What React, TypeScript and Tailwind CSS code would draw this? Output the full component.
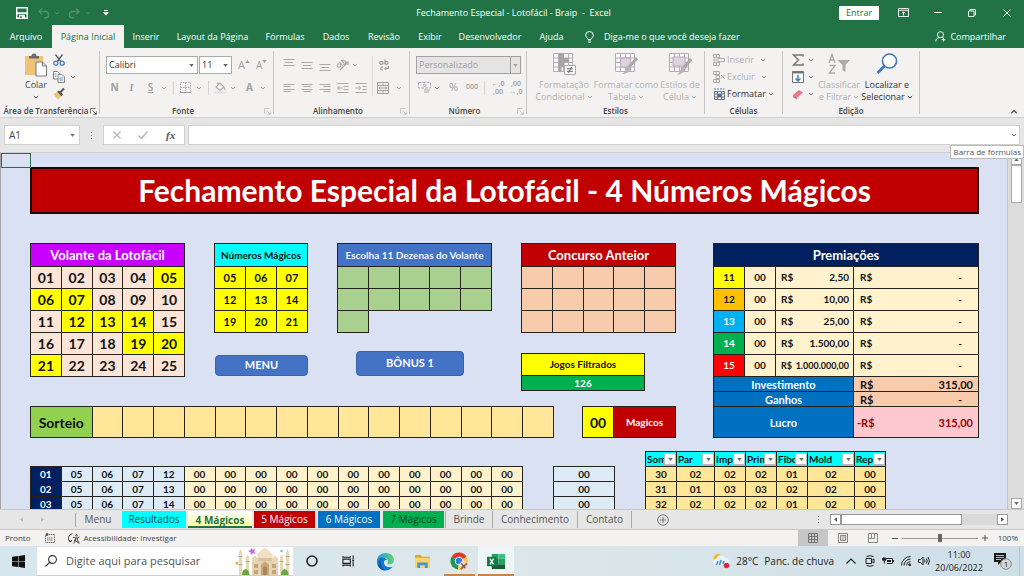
import React from 'react';
import clsx from 'clsx';

const UI = "font-['Open_Sans',sans-serif]";

/* ---------- small shared pieces ---------- */

const Chevron: React.FC<{ className?: string }> = ({ className }) => (
  <svg viewBox="0 0 8 8" className={clsx('size-[6px] shrink-0', className)} fill="none" stroke="currentColor" strokeWidth="1.3">
    <path d="M1.200 2.700 4 5.300 6.800 2.700" />
  </svg>
);

const Triangle: React.FC<{ className?: string }> = ({ className }) => (
  <svg viewBox="0 0 6 4" className={clsx('w-[5px] h-[3px] shrink-0', className)} fill="currentColor">
    <path d="M0 0h6L3 4z" />
  </svg>
);

const Launcher: React.FC<{ className?: string }> = ({ className }) => (
  <svg viewBox="0 0 7 7" className={clsx('size-[7px] shrink-0', className)} fill="none" stroke="currentColor" strokeWidth="0.8">
    <path d="M.5 5.5v-5h5M2.5 2.5l3.6 3.6M6.4 3.4v3H3.4" />
  </svg>
);

interface IconButtonProps {
  label: string;
  className?: string;
  children: React.ReactNode;
}

const IconButton: React.FC<IconButtonProps> = ({ label, className, children }) => (
  <button type="button" aria-label={label} className={clsx('flex items-center justify-center shrink-0', className)}>
    {children}
  </button>
);

interface RibbonGroupProps {
  label: string;
  launcher?: string;
  className?: string;
  children: React.ReactNode;
}

const RibbonGroup: React.FC<RibbonGroupProps> = ({ label, launcher, className, children }) => (
  <section aria-label={label} className={clsx('flex shrink-0', className)}>
    <div className="flex-1 min-w-0 flex flex-col pt-[3px]">
      <div className="flex-1 flex">{children}</div>
      <div className="flex items-center h-[12px] px-[2px] text-[8px] leading-[12px] font-semibold text-[#444]">
        <span className="flex-1 text-center whitespace-nowrap">{label}</span>
        {launcher && <Launcher className={launcher} />}
      </div>
    </div>
    <span className="w-px my-[3px] bg-[#c6c6c6]" />
  </section>
);

const Separator = () => <span className="w-px h-[14px] bg-[#d2d2d2]" />;

/* ---------- title bar and ribbon tabs ---------- */

const TitleBar = () => (
  <header className="flex items-center h-[25px] bg-[#217346] text-white text-[9px]">
    <div className="flex-1 flex items-center pl-[16px] gap-[16px]">
      <IconButton label="Salvar">
        <svg viewBox="0 0 12 12" className="size-[12px]">
          <path d="M.7.7h10.6v10.6H.7z" fill="none" stroke="#fff" strokeWidth="1.4" />
          <path d="M1 5.3h10v2H1zM3 8h6v3.5H3z" fill="#fff" />
          <path d="M4.3 9.3h1.5v2H4.3z" fill="#217346" />
        </svg>
      </IconButton>
      <IconButton label="Desfazer" className="gap-[4px] text-[#4c8f6b] -ml-[6px]">
        <svg viewBox="0 0 12 12" className="size-[12px]" fill="none" stroke="currentColor" strokeWidth="1.4">
          <path d="M4 1.5 1 4.5l3 3M1 4.5h6.5a3 3 0 0 1 0 6.3H6" />
        </svg>
        <Chevron />
      </IconButton>
      <IconButton label="Refazer" className="gap-[5px] text-[#4c8f6b] -ml-[8px]">
        <svg viewBox="0 0 12 12" className="size-[12px]" fill="none" stroke="currentColor" strokeWidth="1.4">
          <path d="m8 1.5 3 3-3 3M11 4.5H4.500a3 3 0 0 0 0 6.300H6" />
        </svg>
        <Chevron />
      </IconButton>
      <IconButton label="Personalizar" className="-ml-[4px]">
        <svg viewBox="0 0 6 6" className="size-[6px]" fill="#fff">
          <path d="M1 0h4v1H1zM0 2.300h6L3 5.500z" />
        </svg>
      </IconButton>
    </div>
    <h1 className="whitespace-pre">Fechamento Especial - Lotofácil - Braip  -  Excel</h1>
    <div className="flex-1 flex items-center justify-end pr-[13px]">
      <button type="button" className="h-[14px] w-[40px] mr-[19px] bg-white text-[#217346]">Entrar</button>
      <IconButton label="Opções da faixa" className="mr-[25px]">
        <svg viewBox="0 0 11 9" className="w-[11px] h-[9px]" fill="none" stroke="#fff" strokeWidth="0.9">
          <path d="M.5.5h10v8H.5zM.5 2.300h10M5.500 7.500V4M4 5.300 5.500 3.800 7 5.300" />
        </svg>
      </IconButton>
      <IconButton label="Minimizar" className="mr-[26px]">
        <span className="block w-[8px] h-px bg-white" />
      </IconButton>
      <IconButton label="Restaurar" className="mr-[27px]">
        <svg viewBox="0 0 8 8" className="size-[8px]" fill="none" stroke="#fff" strokeWidth="0.9">
          <path d="M.5 2h5.500v5.500H.5zM2 2V.5h5.500V6H6" />
        </svg>
      </IconButton>
      <IconButton label="Fechar">
        <svg viewBox="0 0 8 8" className="size-[8px]" stroke="#fff" strokeWidth="0.9">
          <path d="m.5.500 7 7M7.500.500l-7 7" />
        </svg>
      </IconButton>
    </div>
  </header>
);

const RibbonTabs = () => (
  <nav className="flex items-center h-[23px] bg-[#217346] text-white text-[9px] whitespace-nowrap">
    <button type="button" className="w-[52px] h-full">Arquivo</button>
    <button type="button" className="w-[72px] h-full bg-[#f3f2f1] text-[#217346]">Página Inicial</button>
    <button type="button" className="w-[44px] h-full">Inserir</button>
    <button type="button" className="w-[89px] h-full">Layout da Página</button>
    <button type="button" className="w-[56px] h-full">Fórmulas</button>
    <button type="button" className="w-[46px] h-full">Dados</button>
    <button type="button" className="w-[50px] h-full">Revisão</button>
    <button type="button" className="w-[42px] h-full">Exibir</button>
    <button type="button" className="w-[78px] h-full">Desenvolvedor</button>
    <button type="button" className="w-[45px] h-full">Ajuda</button>
    <button type="button" className="flex items-center gap-[10px] h-full pl-[11px]">
      <svg viewBox="0 0 9 12" className="w-[9px] h-[12px]" fill="none" stroke="#fff" strokeWidth="1">
        <path d="M3 8.500C3 7 .7 6.500.7 4.200a3.800 3.700 0 0 1 7.600 0C8.300 6.500 6 7 6 8.500zM3 10h3M3.500 11.500h2" />
      </svg>
      Diga-me o que você deseja fazer
    </button>
    <button type="button" className="flex items-center gap-[4px] h-full ml-auto mr-[18px]">
      <svg viewBox="0 0 12 12" className="size-[11px]" fill="none" stroke="#fff" strokeWidth="1">
        <circle cx="6" cy="4" r="3.300" />
        <path d="M.8 11.500c.2-2.500 1.700-4 3.500-4.500M7.500 7c.8.200 1.400.600 2 1.200M9.300 7.500v4M7.300 9.500h4" />
      </svg>
      Compartilhar
    </button>
  </nav>
);

/* ---------- ribbon ---------- */

const Lines: React.FC<{ label: string; d: string; className?: string }> = ({ label, d, className }) => (
  <IconButton label={label} className={clsx('w-[18px] h-[17px] text-[#a9a9a9]', className)}>
    <svg viewBox="0 0 12 12" className="size-[12px]" fill="none" stroke="currentColor" strokeWidth="1">
      <path d={d} />
    </svg>
  </IconButton>
);

const TableIcon: React.FC<{ children?: React.ReactNode }> = ({ children }) => (
  <svg viewBox="0 0 24 24" className="size-[24px]" fill="none" stroke="#b5acb5" strokeWidth="1">
    <path d="M1.500 1.500h19v18h-19zM1.500 6h19M1.500 10.500h19M1.500 15h19M6.500 1.500v18M11.500 1.500v18M16.500 1.500v18" fill="#faf7fa" />
    {children}
  </svg>
);

interface BigButtonProps {
  icon: React.ReactNode;
  lines: [string, string];
  className?: string;
}

const BigButton: React.FC<BigButtonProps> = ({ icon, lines, className }) => (
  <button type="button" className={clsx('flex flex-col items-center self-start shrink-0 whitespace-nowrap leading-[12px]', className)}>
    <span className="h-[28px] pt-[1px]">{icon}</span>
    <span>{lines[0]}</span>
    <span className="flex items-center gap-[2px]">
      {lines[1]}
      <Chevron />
    </span>
  </button>
);

const ClipboardGroup = () => (
  <RibbonGroup label="Área de Transferência" launcher="text-[#555]" className="w-[100px]">
    <button type="button" className="flex flex-col items-center self-start w-[44px] ml-[14px] leading-[12px] text-[#444]">
      <svg viewBox="0 0 24 24" className="size-[24px] mt-[2px] mb-[2px]">
        <path d="M1 3h18v19H1z" fill="#eec378" />
        <path d="M5 5.500V3h2.500a2.500 2.500 0 0 1 5 0H15v2.500z" fill="#6b6b6b" />
        <path d="M12 9h6.500l4 4v10H12z" fill="#fff" stroke="#777" />
        <path d="M18.500 9v4h4" fill="none" stroke="#777" />
      </svg>
      <span>Colar</span>
      <Chevron className="mt-[3px]" />
    </button>
    <div className="flex flex-col text-[#666]">
      <IconButton label="Recortar" className="w-[12px] h-[17px] -ml-[5px]">
        <svg viewBox="0 0 12 12" className="size-[12px]" fill="none" strokeWidth="1.3">
          <path d="M2.500.5 8 8M9.500.5 4 8" stroke="#5a5a5a" />
          <circle cx="2.800" cy="9.200" r="2" stroke="#4a80bd" />
          <circle cx="9.200" cy="9.200" r="2" stroke="#4a80bd" />
        </svg>
      </IconButton>
      <IconButton label="Copiar" className="h-[17px] gap-[5px] -ml-[5px]">
        <svg viewBox="0 0 12 12" className="size-[12px]" fill="#fff" stroke="#777" strokeWidth="0.9">
          <path d="M.5.5h4l2 2V8h-6z" />
          <path d="M5 3.500h4l2.500 2.500v5.500H5z" />
          <path d="M1.500 3h2M1.500 5h2M6.200 7h4M6.200 9h4" stroke="#4a80bd" />
        </svg>
        <Chevron />
      </IconButton>
      <IconButton label="Pincel" className="w-[12px] h-[17px] -ml-[5px]">
        <svg viewBox="0 0 12 12" className="size-[12px]">
          <path d="m.5 6 4-2 4 4L5 11.800C3.500 9.500 2 8.500.5 6z" fill="#eec378" />
          <path d="m4 3.800 2-1.300 4 3.700-1.500 2z" fill="#555" />
          <path d="m7.500 4 3.500-3.500" stroke="#555" strokeWidth="2" />
        </svg>
      </IconButton>
    </div>
  </RibbonGroup>
);

const FontGroup = () => (
  <RibbonGroup label="Fonte" launcher="text-[#bbb]" className="w-[174px]">
    <div className="flex flex-col pl-[6px] pt-[5px] gap-[5px] text-[#9f9f9f]">
      <div className="flex items-center">
        <label className="grid items-center w-[92px] h-[18px] mr-[1px] border border-[#ababab] bg-white text-[#333]">
          <select aria-label="Fonte" className="col-start-1 row-start-1 appearance-none bg-transparent pl-[2px]">
            <option>Calibri</option>
          </select>
          <Triangle className="col-start-1 row-start-1 justify-self-end mr-[3px] text-[#666]" />
        </label>
        <label className="grid items-center w-[33px] h-[18px] border border-[#ababab] bg-white text-[#333]">
          <select aria-label="Tamanho" className="col-start-1 row-start-1 appearance-none bg-transparent pl-[2px]">
            <option>11</option>
          </select>
          <Triangle className="col-start-1 row-start-1 justify-self-end mr-[3px] text-[#666]" />
        </label>
        <button type="button" className="flex items-start w-[18px] pl-[6px] text-[11px]">A<Triangle className="rotate-180 mt-[3px] w-[3px]" /></button>
        <button type="button" className="flex items-start w-[18px] pl-[6px] text-[10px]">A<Triangle className="mt-[2px] w-[3px]" /></button>
      </div>
      <div className="flex items-center h-[17px] pl-[4px] text-[10px]">
        <button type="button" className="w-[9px] font-bold">N</button>
        <button type="button" className="w-[9px] ml-[8px] font-['Liberation_Serif',serif] italic font-bold">I</button>
        <button type="button" className="w-[9px] ml-[10px] underline font-semibold">S</button>
        <Chevron className="ml-[6px] mr-[6px]" />
        <Separator />
        <svg viewBox="0 0 11 11" className="size-[11px] ml-[6px]" fill="none" stroke="#b9a6bb">
          <path d="M.5.5h10v10H.5zM5.500.5v10M.5 5.500h10" strokeDasharray="1.500 1" />
          <path d="M0 10.500h11" stroke="#999" />
        </svg>
        <Chevron className="ml-[5px] mr-[6px]" />
        <Separator />
        <svg viewBox="0 0 12 12" className="size-[12px] ml-[5px]" fill="none" stroke="#aaa" strokeWidth="1.100">
          <path d="m2 5 4-4 4 4-4 3.500zM4 3V.5M10 5.500q1.500 2 .5 2.500" />
          <path d="M.5 9.500h11v2H.5z" fill="#e3d8e4" stroke="none" />
        </svg>
        <Chevron className="ml-[4px] mr-[9px]" />
        <button type="button" className="w-[9px] font-bold">A</button>
        <Chevron className="ml-[6px]" />
      </div>
    </div>
  </RibbonGroup>
);

const AlignGroup = () => (
  <RibbonGroup label="Alinhamento" launcher="text-[#bbb]" className="w-[136px]">
    <div className="flex flex-col pl-[6px] pt-[5px] gap-[6px] text-[#a9a9a9]">
      <div className="flex items-center">
        <Lines label="Em cima" d="M.5.5h11M2 3.500h8M.5 6.500h11" />
        <Lines label="No meio" d="M.5 3.500h11M2 6.500h8M.5 9.500h11" />
        <Lines label="Embaixo" d="M.5 5.500h11M2 8.500h8M.5 11.500h11" />
        <IconButton label="Orientação" className="w-[25px] h-[17px] gap-[3px]">
          <svg viewBox="0 0 13 12" className="w-[13px] h-[12px]" fill="none" stroke="currentColor" strokeWidth="1.100">
            <circle cx="3" cy="6.500" r="1.800" />
            <path d="m3.500 3 3 3.500M7 5a1.800 1.800 0 1 0-.5-2.800M5 1l3 3M4 11l8-8M12 6V3H9" />
          </svg>
          <Chevron />
        </IconButton>
      </div>
      <div className="flex items-center">
        <Lines label="À esquerda" d="M.5 2.500h11M.5 4.500h7M.5 7.500h11M.5 9.500h7" />
        <Lines label="Centralizar" d="M.5 2.500h11M2.500 4.500h7M.5 7.500h11M2.500 9.500h7" />
        <Lines label="À direita" d="M.5 2.500h11M4.500 4.500h7M.5 7.500h11M4.500 9.500h7" />
        <Lines label="Diminuir recuo" d="M.5 1.500h11M6.500 4.500h5M6.500 7.500h5M.5 10.500h11M5.500 6h-5M2.500 4 .5 6l2 2" />
        <Lines label="Aumentar recuo" d="M.5 1.500h11M7.500 4.500h4M7.500 7.500h4M.5 10.500h11M.5 6h5M3.500 4l2 2-2 2" />
      </div>
    </div>
    <span className="w-px h-[40px] mt-[5px] ml-[2px] bg-[#dadada]" />
    <div className="flex flex-col items-start pl-[4px] pt-[5px] gap-[6px] text-[#9f9f9f]">
      <IconButton label="Quebrar texto" className="w-[14px] h-[17px]">
        <svg viewBox="0 0 12 12" className="size-[12px]" fill="none" stroke="currentColor" strokeWidth="1.200">
          <circle cx="3.200" cy="3.800" r="1.500" />
          <path d="M4.700 2v3.500M7 .5v5" />
          <circle cx="8.600" cy="3.800" r="1.500" />
          <path d="M5 8.200a1.500 1.500 0 1 0 0 2.600M10.500 7v2.500H7M8.300 8.200 7 9.500l1.300 1.300" />
        </svg>
      </IconButton>
      <IconButton label="Mesclar" className="h-[17px] gap-[7px]">
        <svg viewBox="0 0 12 12" className="size-[12px]" fill="none" stroke="currentColor">
          <path d="M.5.5h11v11H.5zM.5 3.500h11M.5 8.500h11M6 .5v3M6 8.500v3M2 6h8M3.500 4.800 2 6l1.500 1.200M8.500 4.800 10 6 8.500 7.200" />
        </svg>
        <Chevron />
      </IconButton>
    </div>
  </RibbonGroup>
);

const DecimalIcon: React.FC<{ label: string; top: string; bottom: string }> = ({ label, top, bottom }) => (
  <button type="button" aria-label={label} className="flex flex-col w-[18px] text-[7px] leading-[8px] font-semibold">
    <span>{top}</span>
    <span>{bottom}</span>
  </button>
);

const NumberGroup = () => (
  <RibbonGroup label="Número" launcher="text-[#bbb]" className="w-[117px]">
    <div className="flex flex-col pl-[6px] pt-[5px] gap-[5px] text-[#9f9f9f]">
      <label className="grid items-center w-[105px] h-[18px] border border-[#a0a0a0] bg-[#e4e4e4] text-[#a0a0a0]">
        <select aria-label="Formato de número" className="col-start-1 row-start-1 appearance-none bg-transparent pl-[2px]">
          <option>Personalizado</option>
        </select>
        <span className="col-start-1 row-start-1 justify-self-end flex items-center justify-center w-[10px] h-full border-l border-[#a0a0a0]">
          <Triangle className="w-[4px]" />
        </span>
      </label>
      <div className="flex items-center h-[17px] pl-[2px]">
        <svg viewBox="0 0 13 12" className="w-[13px] h-[12px]" fill="none" stroke="#b5a8b6">
          <path d="M.5.5h12v5.500H.5z" strokeDasharray="3 1" />
          <circle cx="6.500" cy="3.200" r="1.300" />
          <path d="M6 8h6M6 10h5" stroke="#aaa" />
        </svg>
        <Chevron className="ml-[3px] mr-[9px] text-[#777]" />
        <button type="button" className="w-[17px] text-left text-[11px]">%</button>
        <button type="button" className="w-[18px] text-left text-[7px] font-semibold">000</button>
        <Separator />
        <span className="w-[4px]" />
        <DecimalIcon label="Aumentar casas decimais" top="←,0" bottom=",00" />
        <DecimalIcon label="Diminuir casas decimais" top=",00" bottom="→,0" />
      </div>
    </div>
  </RibbonGroup>
);

const StylesGroup = () => (
  <RibbonGroup label="Estilos" className="w-[178px]">
    <div className="flex text-[#b1b1b1]">
      <BigButton
        className="w-[60px] ml-[7px]"
        lines={['Formatação', 'Condicional']}
        icon={
          <TableIcon>
            <path d="M6.500 1.500h5V6h-5zM6.500 6h10v4.500h-10zM6.500 10.500h6V15h-6zM6.500 15h3v4.500h-3z" fill="#a5a5a5" stroke="none" />
            <path d="M12.500 13.500h11v9h-11z" fill="#fff" stroke="#aaa" />
            <path d="M15 16.800h6M15 19.300h6M19.500 15l-3 6" stroke="#666" />
          </TableIcon>
        }
      />
      <BigButton
        className="w-[64px]"
        lines={['Formatar como', 'Tabela']}
        icon={
          <TableIcon>
            <path d="M6.500 6h10v9h-10z" fill="#ddd2de" />
            <path d="m23 6-8 9" stroke="#a9a9a9" strokeWidth="3" />
            <path d="M14 14c2 0 3 2 2 4s-4 4-8 4c3-2 3-3 3.500-5s1.500-3 2.500-3z" fill="#b5b5b5" stroke="none" />
          </TableIcon>
        }
      />
      <BigButton
        className="w-[44px]"
        lines={['Estilos de', 'Célula']}
        icon={
          <TableIcon>
            <path d="M5 5h12v9H5z" fill="#ddd2de" />
            <path d="m23 7-7 9" stroke="#a9a9a9" strokeWidth="3" />
            <path d="M15 15c2 0 3 2 2 3.500s-4 4-8 4c3-2 3-3 3.500-5S14 15 15 15z" fill="#b5b5b5" stroke="none" />
          </TableIcon>
        }
      />
    </div>
  </RibbonGroup>
);

const CellsGroup = () => (
  <RibbonGroup label="Células" className="w-[78px]">
    <div className="flex flex-col pl-[8px] text-[#b1b1b1]">
      <button type="button" className="flex items-center h-[17px] gap-[2px]">
        <svg viewBox="0 0 12 12" className="size-[12px]" fill="none" stroke="#aaa">
          <path d="M.5.5h6v3h-6zM.5 8.500h6v3h-6zM3.500.5v3M3.500 8.500v3M5 4.500h6.500v3H5zM4 6H.5M2 4.500.5 6 2 7.500" />
        </svg>
        Inserir
        <Chevron className="ml-[4px] text-[#888]" />
      </button>
      <button type="button" className="flex items-center h-[17px] gap-[2px]">
        <svg viewBox="0 0 12 12" className="size-[12px]" fill="none" stroke="#aaa">
          <path d="M.5.5h6v3h-6zM.5 8.500h6v3h-6zM3.500.5v3M3.500 8.500v3M3 4.500h3.500v3H3zM8 4l3.500 3.500M11.500 4 8 7.500" />
        </svg>
        Excluir
        <Chevron className="ml-[4px] text-[#888]" />
      </button>
      <button type="button" className="flex items-center h-[17px] gap-[2px] text-[#333]">
        <svg viewBox="0 0 12 12" className="size-[12px]" fill="none" stroke="#777">
          <path d="M1.500 3.500h10v8h-10zM1.500 6h10M1.500 9h10M4.500 3.500v8M8.500 3.500v8" />
          <path d="M4.500 6h4v3h-4z" fill="#3f78b8" stroke="none" />
          <path d="M1 1h10.500" stroke="#3f78b8" strokeDasharray="2 1" />
        </svg>
        Formatar
        <Chevron className="text-[#666]" />
      </button>
    </div>
  </RibbonGroup>
);

const EditGroup = () => (
  <RibbonGroup label="Edição" className="w-[137px]">
    <div className="flex flex-col pl-[9px] text-[#777]">
      <IconButton label="AutoSoma" className="h-[17px] gap-[4px]">
        <svg viewBox="0 0 12 12" className="size-[12px]" fill="none" stroke="#777" strokeWidth="1.500">
          <path d="M11 2.500V1H1.500l5 5-5 5H11V9.500" />
        </svg>
        <Chevron />
      </IconButton>
      <IconButton label="Preencher" className="h-[17px] gap-[4px]">
        <svg viewBox="0 0 12 12" className="size-[12px]" fill="#fff" stroke="#777">
          <path d="M.5.500h11v11H.500z" />
          <path d="M.5 1.500h11" strokeWidth="2" />
          <path d="M6 4v6M3.500 7.500 6 10l2.500-2.500" fill="none" stroke="#3f78b8" strokeWidth="1.400" />
        </svg>
        <Chevron />
      </IconButton>
      <IconButton label="Limpar" className="h-[17px] gap-[4px]">
        <svg viewBox="0 0 12 12" className="size-[12px]">
          <path d="m1 7 6-5 4 2.500-6 5.500z" fill="#e8788a" />
          <path d="m1 7 4 3-.2 1.500L1 9z" fill="#c95c6e" />
        </svg>
        <Chevron />
      </IconButton>
    </div>
    <BigButton
      className="w-[44px] ml-[3px] text-[#b1b1b1]"
      lines={['Classificar', 'e Filtrar']}
      icon={
        <svg viewBox="0 0 24 24" className="size-[24px]" fill="none" stroke="#aaa" strokeWidth="1.300">
          <path d="m2 11 3-8.500L8 11M3 8h4M2.500 13.500H8l-5.500 7.500H8" />
          <path d="M10.500 8h12.500l-4.500 5v7l-3-2v-5z" fill="#aaa" stroke="none" />
        </svg>
      }
    />
    <BigButton
      className="w-[48px] ml-[2px] text-[#333]"
      lines={['Localizar e', 'Selecionar']}
      icon={
        <svg viewBox="0 0 24 24" className="size-[24px]" fill="none" stroke="#3f78b8">
          <circle cx="14.500" cy="9" r="7" strokeWidth="1.600" fill="#fff" />
          <path d="m9.500 14-7 7" strokeWidth="2.800" />
        </svg>
      }
    />
  </RibbonGroup>
);

const Ribbon = () => (
  <div className="flex h-[69px] bg-[#f3f2f1] text-[9px]">
    <ClipboardGroup />
    <FontGroup />
    <AlignGroup />
    <NumberGroup />
    <StylesGroup />
    <CellsGroup />
    <EditGroup />
    <IconButton label="Recolher faixa" className="ml-auto mr-[6px] self-end mb-[1px] text-[#555]">
      <Chevron className="rotate-180 size-[8px]" />
    </IconButton>
  </div>
);

const FormulaBar = () => (
  <div className="relative flex items-center h-[36px] pl-[4px] pr-[4px] bg-[#e6e6e6] border-t border-b border-[#cfcfcf] text-[10px] text-[#444]">
    <label className="grid items-center w-[76px] h-[20px] bg-white border border-[#d0d0d0]">
      <input aria-label="Caixa de nome" defaultValue="A1" className="col-start-1 row-start-1 w-full pl-[4px] bg-transparent" />
      <Triangle className="col-start-1 row-start-1 justify-self-end mr-[4px] text-[#777]" />
    </label>
    <span className="flex flex-col gap-[2px] mx-[11px]">
      <i className="size-px bg-[#888]" />
      <i className="size-px bg-[#888]" />
      <i className="size-px bg-[#888]" />
    </span>
    <div className="flex items-center justify-around w-[82px] h-[20px] mr-[3px] bg-white border border-[#d0d0d0] text-[#b5b5b5]">
      <IconButton label="Cancelar">
        <svg viewBox="0 0 8 8" className="size-[8px]" stroke="currentColor" strokeWidth="1.200"><path d="m.5.500 7 7M7.500.500l-7 7" /></svg>
      </IconButton>
      <IconButton label="Inserir">
        <svg viewBox="0 0 10 8" className="w-[10px] h-[8px]" fill="none" stroke="currentColor" strokeWidth="1.500"><path d="m.5 4.500 3 3 6-7" /></svg>
      </IconButton>
      <button type="button" className="font-['Liberation_Serif',serif] italic font-bold text-[11px] text-[#555]">fx</button>
    </div>
    <label className="flex-1 grid items-center h-[20px] bg-white border border-[#d0d0d0]">
      <input aria-label="Barra de fórmulas" className="col-start-1 row-start-1 w-full bg-transparent" />
      <Chevron className="col-start-1 row-start-1 justify-self-end mr-[2px] text-[#555]" />
    </label>
    <span role="tooltip" className="absolute right-0 top-[27px] z-10 px-[2px] border border-[#bbb] bg-white text-[8px] leading-[12px] font-medium text-[#555]">
      Barra de fórmulas
    </span>
  </div>
);

/* ---------- worksheet ---------- */

const MAGIC = ['05', '06', '07', '12', '13', '14', '19', '20', '21'];

const td = 'border border-[#26221c] p-0 text-center';

const range = (n: number) => Array.from({ length: n }, (_, i) => i);
const pad = (n: number) => String(n).padStart(2, '0');

interface PanelProps {
  title: string;
  cols: number;
  className: string;
  headClass: string;
  children: React.ReactNode;
}

const Panel: React.FC<PanelProps> = ({ title, cols, className, headClass, children }) => (
  <table className={clsx('table-fixed border-collapse font-bold', className)}>
    <thead>
      <tr className="h-[23px]">
        <th colSpan={cols} className={clsx(td, 'whitespace-nowrap', headClass)}>{title}</th>
      </tr>
    </thead>
    <tbody>{children}</tbody>
  </table>
);

const Volante = () => (
  <Panel title="Volante da Lotofácil" cols={5} className="w-[155px] text-[14px] leading-[16px]" headClass="bg-[#c800ff] text-white text-[13px]">
    {range(5).map((r) => (
      <tr key={r} className="h-[22px]">
        {range(5).map((c) => {
          const n = pad(r * 5 + c + 1);
          return (
            <td key={c} className={clsx(td, MAGIC.includes(n) ? 'bg-[#ffff00]' : 'bg-[#fce4d6]')}>{n}</td>
          );
        })}
      </tr>
    ))}
  </Panel>
);

const Numeros = () => (
  <Panel title="Números Mágicos" cols={3} className="w-[94px] text-[11px] leading-[14px]" headClass="bg-[#00ffff] text-[10px]">
    {range(3).map((r) => (
      <tr key={r} className="h-[22px]">
        {range(3).map((c) => (
          <td key={c} className={clsx(td, 'bg-[#ffff00]')}>{MAGIC[r * 3 + c]}</td>
        ))}
      </tr>
    ))}
  </Panel>
);

const Escolha = () => (
  <Panel title="Escolha 11 Dezenas do Volante" cols={5} className="w-[155px] leading-[14px]" headClass="bg-[#4472c4] text-[#f0f4fc] text-[10px]">
    {[5, 5, 1].map((count, r) => (
      <tr key={r} className="h-[22px]">
        {range(count).map((c) => (
          <td key={c} className={clsx(td, 'bg-[#a9d08e]')} />
        ))}
      </tr>
    ))}
  </Panel>
);

const Concurso = () => (
  <Panel title="Concurso Anteior" cols={5} className="w-[155px] leading-[16px]" headClass="bg-[#c00000] text-white text-[13px]">
    {range(3).map((r) => (
      <tr key={r} className="h-[22px]">
        {range(5).map((c) => (
          <td key={c} className={clsx(td, 'bg-[#f8cbad]')} />
        ))}
      </tr>
    ))}
  </Panel>
);

const prizes = [
  { hits: '11', value: '2,50', color: 'bg-[#ffff00]' },
  { hits: '12', value: '10,00', color: 'bg-[#ffc000]' },
  { hits: '13', value: '25,00', color: 'bg-[#00b0f0] text-white' },
  { hits: '14', value: '1.500,00', color: 'bg-[#00b050] text-white' },
  { hits: '15', value: '1.000.000,00', color: 'bg-[#ff0000] text-white' },
];

const totals = [
  { label: 'Investimento', sign: 'R$', value: '315,00', row: 'h-[15px]', color: 'bg-[#f8cbad]' },
  { label: 'Ganhos', sign: 'R$', value: '-', row: 'h-[15px]', color: 'bg-[#f8cbad]' },
  { label: 'Lucro', sign: '-R$', value: '315,00', row: 'h-[31px]', color: 'bg-[#ffc7ce] text-[#9c0006]' },
];

const Premiacoes = () => (
  <table className="table-fixed border-collapse w-[266px] font-bold text-[10px] leading-[13px]">
    <colgroup>
      <col className="w-[31px]" />
      <col className="w-[31px]" />
      <col className="w-[78px]" />
      <col />
    </colgroup>
    <thead>
      <tr className="h-[23px]">
        <th colSpan={4} className={clsx(td, 'bg-[#002060] text-white text-[13px]')}>Premiações</th>
      </tr>
    </thead>
    <tbody>
      {prizes.map((p) => (
        <tr key={p.hits} className="h-[22px] bg-[#fff2cc]">
          <td className={clsx(td, p.color)}>{p.hits}</td>
          <td className={td}>00</td>
          <td className={td}>
            <div className={clsx('flex justify-between pl-[5px] pr-[4px]', p.value.length > 10 && 'text-[9px]')}>
              <span>R$</span>
              <span>{p.value}</span>
            </div>
          </td>
          <td className={td}>
            <div className="flex justify-between pl-[6px] pr-[16px]"><span>R$</span><span>-</span></div>
          </td>
        </tr>
      ))}
      {totals.map((t) => (
        <tr key={t.label} className={clsx(t.row, 'text-[11px]')}>
          <td colSpan={3} className={clsx(td, 'bg-[#0070c0] text-white')}>{t.label}</td>
          <td className={clsx(td, t.color)}>
            <div className={clsx('flex justify-between', t.sign === 'R$' ? 'pl-[6px]' : 'pl-[3px]', t.value === '-' ? 'pr-[16px]' : 'pr-[5px]')}>
              <span>{t.sign}</span>
              <span>{t.value}</span>
            </div>
          </td>
        </tr>
      ))}
    </tbody>
  </table>
);

const filters = ['Soma', 'Par', 'Impar', 'Primo', 'Fibo', 'Mold', 'Rep'];
const filterCols = ['w-[31px]', 'w-[38px]', 'w-[31px]', 'w-[31px]', 'w-[31px]', 'w-[47px]', 'w-[31px]'];
const filterRows = [
  ['30', '02', '02', '02', '01', '02', '00'],
  ['31', '01', '03', '03', '02', '02', '00'],
  ['32', '02', '02', '02', '01', '02', '00'],
];

const FilterTable = () => (
  <table className="table-fixed border-collapse w-[240px]">
    <colgroup>
      {filterCols.map((w, i) => (
        <col key={i} className={w} />
      ))}
    </colgroup>
    <thead>
      <tr className="h-[15px] bg-[#00ffff]">
        {filters.map((f) => (
          <th key={f} className={clsx(td, 'text-left')}>
            <div className="flex items-center pl-[1px]">
              <span className="flex-1 overflow-hidden">{f}</span>
              <button type="button" aria-label={`Filtrar ${f}`} className="flex items-center justify-center shrink-0 w-[12px] h-[12px] border border-[#bbb] bg-white text-[#666]">
                <Triangle />
              </button>
            </div>
          </th>
        ))}
      </tr>
    </thead>
    <tbody>
      {filterRows.map((row) => (
        <tr key={row[0]} className="h-[15px] bg-[#ffe699]">
          {row.map((v, i) => (
            <td key={i} className={td}>{v}</td>
          ))}
        </tr>
      ))}
    </tbody>
  </table>
);

const Worksheet = () => (
  <main className="flex-1 min-h-0 flex bg-[#d9e1f2]">
    <div className="relative flex-1 min-w-0 overflow-hidden pl-[29px] pr-[28px] pt-[14px] border-l border-[#a6a6a6] font-['Lato',sans-serif] text-[#111]">
      <span className="absolute left-0 top-0 w-[30px] h-[15px] border border-[#217346]" />
      <h2 className="flex items-center justify-center h-[47px] border-2 border-[#1a0a0a] bg-[#c00000] text-white text-[30px] font-bold whitespace-nowrap">
        Fechamento Especial da Lotofácil - 4 Números Mágicos
      </h2>
      <div className="flex items-start gap-[37px] mt-[29px]">
        <div className="shrink-0">
          <div className="flex items-start gap-[29px] h-[163px]">
            <Volante />
            <div className="flex flex-col">
              <Numeros />
              <button type="button" className="h-[21px] mt-[22px] ml-[1px] rounded-[4px] border border-[#3a62ab] bg-[#4472c4] text-white font-bold text-[11px]">MENU</button>
            </div>
            <div className="flex flex-col items-start">
              <Escolha />
              <button type="button" className="w-[108px] h-[25px] mt-[18px] ml-[19px] rounded-[4px] border border-[#3a62ab] bg-[#4472c4] text-white font-bold text-[11px]">BÔNUS 1</button>
            </div>
            <div>
              <Concurso />
              <table className="table-fixed border-collapse w-[124px] mt-[20px] font-bold text-[10px] leading-[13px]">
                <tbody>
                  <tr className="h-[22px]"><th className={clsx(td, 'bg-[#ffff00]')}>Jogos Filtrados</th></tr>
                  <tr className="h-[15px]"><td className={clsx(td, 'bg-[#00b050] text-white')}>126</td></tr>
                </tbody>
              </table>
            </div>
          </div>
          <div className="flex justify-between">
            <table className="table-fixed border-collapse w-[524px] font-bold text-[14px]">
              <tbody>
                <tr className="h-[31px]">
                  <th colSpan={2} className={clsx(td, 'bg-[#92d050]')}>Sorteio</th>
                  {range(15).map((c) => (
                    <td key={c} className={clsx(td, 'bg-[#ffe699]')} />
                  ))}
                </tr>
              </tbody>
            </table>
            <table className="table-fixed border-collapse w-[94px] font-bold text-[10px]">
              <tbody>
                <tr className="h-[31px]">
                  <td className={clsx(td, 'bg-[#ffff00] text-[14px]')}>00</td>
                  <th colSpan={2} className={clsx(td, 'bg-[#c00000] text-white')}>Magicos</th>
                </tr>
              </tbody>
            </table>
          </div>
        </div>
        <Premiacoes />
      </div>
      <div className="flex items-end gap-[30px] mt-[13px] font-bold text-[10px] leading-[14px]">
        <table className="table-fixed border-collapse w-[493px]">
          <tbody>
            {['12', '13', '14'].map((last, r) => (
              <tr key={last} className="h-[15px]">
                <th className={clsx(td, 'bg-[#002060] text-white')}>{pad(r + 1)}</th>
                {['05', '06', '07', last].map((v) => (
                  <td key={v} className={clsx(td, 'bg-[#ddebf7]')}>{v}</td>
                ))}
                {range(11).map((c) => (
                  <td key={c} className={clsx(td, 'bg-[#fff2cc]')}>00</td>
                ))}
              </tr>
            ))}
          </tbody>
        </table>
        <table className="table-fixed border-collapse w-[62px]">
          <tbody>
            {range(3).map((r) => (
              <tr key={r} className="h-[15px]"><td className={clsx(td, 'bg-[#ddebf7]')}>00</td></tr>
            ))}
          </tbody>
        </table>
        <FilterTable />
      </div>
    </div>
    <div className="flex flex-col items-center w-[17px] pt-[1px] bg-[#dcdcdc] border-l border-[#c3c3c3]">
      <IconButton label="Rolar para cima" className="w-[11px] h-[11px] border border-[#aaa] bg-white text-[#666]">
        <Triangle className="rotate-180" />
      </IconButton>
      <span className="w-[11px] h-[38px] border border-[#aaa] bg-white" />
      <IconButton label="Rolar para baixo" className="w-[11px] h-[11px] mt-auto border border-[#aaa] bg-white text-[#666]">
        <Triangle />
      </IconButton>
    </div>
  </main>
);

/* ---------- sheet tabs and status bar ---------- */

const sheets = [
  { name: 'Menu', className: 'w-[44px]' },
  { name: 'Resultados', className: 'w-[64px] mx-[2px] bg-[#00ffff] text-[#0b4545]' },
  { name: '4 Mágicos', className: 'w-[64px] mr-[2px] pt-[2px] bg-linear-to-b from-white to-[#ffffa0] font-bold text-[#217346] border-b-2 border-[#217346]' },
  { name: '5 Mágicos', className: 'w-[61px] mr-[3px] bg-[#c00000] text-white' },
  { name: '6 Mágicos', className: 'w-[62px] mr-[3px] bg-[#0070c0] text-white' },
  { name: '7 Mágicos', className: 'w-[61px] mr-[1px] bg-[#00b050] text-[#0c3b20]' },
  { name: 'Brinde', className: 'w-[48px] border-x border-[#aaa]' },
  { name: 'Conhecimento', className: 'w-[85px] border-r border-[#aaa]' },
  { name: 'Contato', className: 'w-[54px] border-r border-[#aaa]' },
];

const SheetTabs = () => (
  <nav className="flex items-center h-[21px] bg-[#e6e6e6] border-t border-b border-[#c8c8c8] text-[10px] text-[#555]">
    <div className="flex items-center gap-[16px] w-[75px] pl-[19px] text-[#bbb]">
      <Triangle className="rotate-90" />
      <Triangle className="-rotate-90" />
    </div>
    <span className="w-px h-[14px] bg-[#aaa]" />
    {sheets.map((s) => (
      <button key={s.name} type="button" className={clsx('h-[17px] shrink-0 leading-[15px] whitespace-nowrap', s.className)}>
        {s.name}
      </button>
    ))}
    <IconButton label="Nova planilha" className="ml-[25px]">
      <svg viewBox="0 0 12 12" className="size-[12px]" fill="none" stroke="#777"><circle cx="6" cy="6" r="5.300" /><path d="M6 3v6M3 6h6" /></svg>
    </IconButton>
    <span className="flex flex-col gap-[2px] ml-auto mr-[11px]">
      <i className="size-px bg-[#888]" />
      <i className="size-px bg-[#888]" />
      <i className="size-px bg-[#888]" />
    </span>
    <div className="flex w-[178px] h-[11px] mr-[16px] bg-[#d9d9d9]">
      <IconButton label="Rolar para a esquerda" className="w-[11px] border border-[#999] bg-white text-[#555]"><Triangle className="rotate-90" /></IconButton>
      <span className="w-[121px] border border-[#999] bg-white" />
      <IconButton label="Rolar para a direita" className="w-[11px] ml-auto border border-[#999] bg-white text-[#555]"><Triangle className="-rotate-90" /></IconButton>
    </div>
  </nav>
);

const StatusBar = () => (
  <div className="flex items-center h-[16px] bg-[#f3f2f1] text-[8px] font-medium text-[#444]">
    <span className="ml-[5px]">Pronto</span>
    <svg viewBox="0 0 10 10" className="size-[10px] ml-[15px]" fill="none" stroke="#777">
      <path d="M.5 2.500v7h9v-7M4 1.500h5.500M2 5h6M2 7h6" strokeDasharray="1.500 .5" />
      <circle cx="2" cy="1.500" r="1.500" fill="#555" stroke="none" />
    </svg>
    <button type="button" className="flex items-center gap-[3px] ml-[13px]">
      <svg viewBox="0 0 12 11" className="w-[12px] h-[11px]" fill="none" stroke="#444">
        <path d="M4.500.7a4.500 4.500 0 0 0-2 8.300M.8 7.500l2 1.500L4 7" />
        <path d="M5 4.200l2.500.8h2L11.500 4M7.500 5v2l-1.800 3.500M9.500 5v2l1.800 3.500M6 7l5 3" />
        <circle cx="8.500" cy="2.500" r=".8" />
      </svg>
      Acessibilidade: investigar
    </button>
    <IconButton label="Normal" className="w-[30px] h-full ml-auto bg-[#c6c6c6]">
      <svg viewBox="0 0 10 10" className="size-[10px]" fill="none" stroke="#777"><path d="M.5.500h9v9H.500zM.5 3.500h9M.5 6.500h9M3.500.5v9M6.500.5v9" /></svg>
    </IconButton>
    <IconButton label="Layout da página" className="w-[30px]">
      <svg viewBox="0 0 10 10" className="size-[10px]" fill="none" stroke="#888"><path d="M.5.500h9v9H.500zM2.500 2.500h5v5h-5zM3.500 4h3M3.500 6h3" /></svg>
    </IconButton>
    <IconButton label="Quebra de página" className="w-[30px]">
      <svg viewBox="0 0 10 10" className="size-[10px]" fill="none" stroke="#888"><path d="M.5.500h9v9H.500zM.5 5.500h6v-5M3.500.5v5" /></svg>
    </IconButton>
    <span className="w-[6px] h-px ml-[4px] bg-[#555]" />
    <label className="grid items-center w-[76px] mx-[4px]">
      <input type="range" aria-label="Zoom" defaultValue={50} className="col-start-1 row-start-1 w-full h-[10px] appearance-none bg-transparent [&::-webkit-slider-runnable-track]:h-[8px] [&::-webkit-slider-runnable-track]:bg-[linear-gradient(#999,#999)] [&::-webkit-slider-runnable-track]:bg-[length:100%_1px] [&::-webkit-slider-runnable-track]:bg-center [&::-webkit-slider-runnable-track]:bg-no-repeat [&::-webkit-slider-thumb]:appearance-none [&::-webkit-slider-thumb]:w-[4px] [&::-webkit-slider-thumb]:h-[8px] [&::-webkit-slider-thumb]:bg-[#666]" />
    </label>
    <svg viewBox="0 0 6 6" className="size-[6px]" stroke="#555"><path d="M3 0v6M0 3h6" /></svg>
    <span className="ml-[10px] mr-[6px]">100%</span>
  </div>
);

/* ---------- taskbar ---------- */

const TajMahal = () => (
  <svg viewBox="0 0 58 28" className="w-[58px] h-[28px] shrink-0">
    <path d="M17 28V14h26v14z" fill="#e6d3b3" />
    <path d="M23 14V11h14v3z" fill="#d8c09a" />
    <path d="M23 11c-3-5 3-7 7-10.500C34 4 40 6 37 11z" fill="#f0e0c4" />
    <path d="M17 14c-1.500-3 1.500-4 3-5.500 1.500 1.500 4 2.500 3 5.500zM37 14c-1.500-3 1.500-4 3-5.500 1.500 1.500 4 2.500 3 5.500z" fill="#ead7b8" />
    <path d="M26 28v-9c0-3 3-3 4-5 1 2 4 2 4 5v9z" fill="#c9a77a" />
    <path d="M28 28v-7c0-2 4-2 4 0v7z" fill="#a88760" />
    <path d="M19 17h4v4h-4zM19 23h4v4h-4zM37 17h4v4h-4zM37 23h4v4h-4z" fill="#c4a47a" />
    <path d="M4 28V5l1.500-3L7 5v23zM11 28V10l1.500-2.500L14 10v18zM45 28V10l1.500-2.500L48 10v18zM51 28V5l1.500-3L54 5v23z" fill="#e8d6b8" />
    <path d="M3.500 9h4v1h-4zM3.500 17h4v1h-4zM50.500 9h4v1h-4zM50.500 17h4v1h-4zM10.500 14h4v1h-4zM44.500 14h4v1h-4z" fill="#bfa27a" />
    <path d="M7 28q0-5 3.500-6 4 1 4 6zM46 28q0-5 3.500-6 4 1 4 6z" fill="#6aa63f" />
    <path d="m16 1 1.500 1.500 2.500-.5-.8 2.500L20.500 7l-2.500-.7L16 8l-.5-2.700L13 4l2.500-.8z" fill="#c86be0" />
    <circle cx="1.800" cy="16" r="1.500" fill="#f5a623" />
    <circle cx="46.500" cy="4" r="1.300" fill="#58cde4" />
  </svg>
);

const Taskbar = () => (
  <footer className="flex items-center h-[30px] bg-linear-to-r from-[#d6e6ee] via-[#dce7ea] to-[#cfdfe8] text-[#222]">
    <IconButton label="Iniciar" className="w-[37px] h-full">
      <svg viewBox="0 0 12 12" className="size-[13px]" fill="#111">
        <path d="M0 1.700 5.500 1v4.700H0zM6 .9l6-.9v5.700H6zM0 6.300h5.500V11L0 10.300zM6 6.300h6V12l-6-.9z" />
      </svg>
    </IconButton>
    <label className="flex items-center w-[256px] h-[29px] self-end pl-[8px] bg-white border-b border-[#ccc]">
      <svg viewBox="0 0 12 12" className="size-[12px] shrink-0" fill="none" stroke="#333" strokeWidth="1.100">
        <circle cx="7.500" cy="4.500" r="3.900" />
        <path d="m4.500 7.500-4 4" />
      </svg>
      <input aria-label="Pesquisar" placeholder="Digite aqui para pesquisar" className="flex-1 min-w-0 ml-[9px] bg-transparent text-[11px] placeholder:text-[#555] placeholder:opacity-100" />
      <TajMahal />
    </label>
    <IconButton label="Cortana" className="w-[37px] h-full">
      <svg viewBox="0 0 12 12" className="size-[12px]" fill="none" stroke="#222" strokeWidth="1.600"><circle cx="6" cy="6" r="5" /></svg>
    </IconButton>
    <IconButton label="Visão de tarefas" className="w-[36px] h-full">
      <svg viewBox="0 0 14 12" className="w-[13px] h-[12px]" fill="none" stroke="#222" strokeWidth="1.200">
        <path d="M1 .5V2h8V.5M1 4h8v4.500H1zM1 12v-1.500h8V12M12 0v4M12 7v5" />
        <path d="M11 4.500h2v2h-2z" fill="#222" stroke="none" />
      </svg>
    </IconButton>
    <IconButton label="Edge" className="w-[38px] h-full">
      <svg viewBox="0 0 20 20" className="size-[19px]">
        <defs>
          <linearGradient id="edgeTop" x1="0" x2="1" y1="0" y2="0">
            <stop offset="0" stopColor="#2a9be0" />
            <stop offset="1" stopColor="#5fd46b" />
          </linearGradient>
        </defs>
        <path d="M1 10C1 4 5 1 10.500 1 16 1 19 5 19 8.500c0 3-2 4.500-4.500 4.500-2 0-3-.8-2.500-1.500C13.500 9 12 6 8 6 4.500 6 2 7.500 1 10z" fill="url(#edgeTop)" />
        <path d="M1 10c.5-3 4-4.500 7-4 1.500.2 3.500 1.500 4 3-1-1-3-.5-3.500 1-.8 3 2 6 5.500 6 1.500 0 2.500-.3 3.500-.8C16 18 13 19.300 10 19.300 5 19.300.8 15 1 10z" fill="#1477d1" />
        <path d="M5 11c0 4 3 7.500 6 8.300-3.500.3-6.500-1-8-3.300C2 13.500 3 8 8 6.500 6 7.500 5 9 5 11z" fill="#1156a6" />
      </svg>
    </IconButton>
    <IconButton label="Explorador" className="w-[37px] h-full">
      <svg viewBox="0 0 18 16" className="w-[17px] h-[15px]">
        <path d="M1 1h6l1.500 2H17v4H1z" fill="#e0a52c" />
        <path d="M1 4h16v11H1z" fill="#fcd466" />
        <path d="M3.500 15V9h11v6h-3v-3h-5v3z" fill="#3f95d9" />
      </svg>
    </IconButton>
    <IconButton label="Chrome" className="w-[31px] h-full mx-[3px] border-b-2 border-[#c8824a] pt-[2px]">
      <svg viewBox="0 0 20 20" className="size-[19px]">
        <path d="M9.500 9.500 1.700 5A9 9 0 0 1 17.500 5.300z" fill="#e0392c" />
        <path d="M9.500 9.500 1.700 5A9 9 0 0 0 8.500 18.500z" fill="#1e9a50" />
        <path d="M9.500 9.500 17.500 5.300A9 9 0 0 1 8.500 18.500z" fill="#fcc934" />
        <circle cx="9.500" cy="9.500" r="4.500" fill="#fff" />
        <circle cx="9.500" cy="9.500" r="3.500" fill="#2f7de1" />
        <circle cx="14.500" cy="14.500" r="5" fill="#f1d9c4" />
        <path d="m10.500 17 7-6 1 2-6.500 6z" fill="#c0622f" />
        <path d="m12 12 4 5" stroke="#3d5ca8" strokeWidth="1.500" />
      </svg>
    </IconButton>
    <IconButton label="Excel" className="w-[36px] h-full border-b-2 border-[#c8824a] bg-[#edf5f6] pt-[2px]">
      <svg viewBox="0 0 20 18" className="w-[19px] h-[17px]">
        <path d="M5 1h7v5H5z" fill="#21a366" />
        <path d="M12 1h7v5h-7z" fill="#33c481" />
        <path d="M5 6h7v6H5z" fill="#107c41" />
        <path d="M12 6h7v6h-7z" fill="#21a366" />
        <path d="M5 12h14v5H5z" fill="#185c37" />
        <path d="M0 4h10v10H0z" fill="#107c41" />
        <path d="m3 6 4 6M7 6l-4 6" stroke="#fff" strokeWidth="1.400" />
      </svg>
    </IconButton>
    <button type="button" className="flex items-center h-full ml-auto text-[10px]">
      <svg viewBox="0 0 18 16" className="w-[18px] h-[16px] mr-[6px]">
        <circle cx="6" cy="5.500" r="4.500" fill="#f7b733" />
        <path d="M4 12a3.300 3.300 0 0 1 .5-6.500A4.500 4.500 0 0 1 13 5a3.500 3.500 0 0 1 1 7z" fill="#e9f2fb" />
        <path d="m6 8-1.500 4M9 7l-1.500 5M12 8l-1 3" stroke="#3b8ede" strokeWidth="1.500" />
        <circle cx="14.500" cy="12.500" r="2.800" fill="#d6293e" />
      </svg>
      <span className="mr-[6px] text-[10px]">28°C</span>
      <span>Panc. de chuva</span>
    </button>
    <div className="flex items-center gap-[7px] ml-[12px]">
      <IconButton label="Ícones ocultos" className="mr-[2px]">
        <svg viewBox="0 0 10 6" className="w-[10px] h-[6px]" fill="none" stroke="#222" strokeWidth="1.200"><path d="m.5 5.500 4.500-4.500 4.500 4.500" /></svg>
      </IconButton>
      <svg viewBox="0 0 10 12" className="w-[10px] h-[12px]" fill="none" stroke="#222">
        <path d="M1 3.500h5.500v5H1zM6.500 5.500 9 4v4L6.500 6.500M1.500 1.500Q5 0 8.500 1.500M1.500 10.500q3.500 1.500 7 0" />
      </svg>
      <svg viewBox="0 0 12 10" className="w-[12px] h-[10px]" fill="none" stroke="#222">
        <path d="M4 2.500h6.500v5H5M11.500 4v2M.8 2v2q1.500 2 3 0V2zM2.300 5v2.500" />
        <path d="M5 4h4v2H5zM.5 2h3.500v2.500H.5z" fill="#222" stroke="none" />
      </svg>
      <svg viewBox="0 0 10 10" className="size-[10px]" fill="none" stroke="#222">
        <path d="M.5 9.500A9 9 0 0 1 9.500.5M3 9.500A6.500 6.500 0 0 1 9.500 3M5.500 9.500a4 4 0 0 1 4-4" />
        <circle cx="8.800" cy="8.800" r="1" fill="#222" />
      </svg>
      <svg viewBox="0 0 12 10" className="w-[12px] h-[10px]" fill="none" stroke="#222">
        <path d="M.5 3.500h2L5 1v8L2.500 6.500h-2zM6.500 3.500q1 1.500 0 3M8.300 2.300q2 2.700 0 5.400M10 1q3 4 0 8" />
      </svg>
    </div>
    <div className="w-[58px] text-center text-[9px] leading-[13px]">
      <div>11:00</div>
      <div>20/06/2022</div>
    </div>
    <IconButton label="Notificações" className="ml-[6px] mr-[7px]">
      <svg viewBox="0 0 18 18" className="size-[18px]">
        <path d="M0 1h12v9H7l-3 3v-3H0z" fill="#1a1a1a" />
        <path d="M2 3.500h8M2 5.500h8M2 7.500h5" stroke="#dfe8ec" strokeWidth=".8" />
        <circle cx="12" cy="12" r="5.300" fill="#d4d4d4" stroke="#8a8a8a" />
        <text x="12" y="15" textAnchor="middle" fontSize="8" fill="#222">1</text>
      </svg>
    </IconButton>
    <span className="w-px h-full mr-[4px] bg-[#b9c8d0]" />
  </footer>
);

const App: React.FC = () => {
  return (
    <div className={clsx('flex flex-col h-screen overflow-hidden', UI)}>
      <TitleBar />
      <RibbonTabs />
      <Ribbon />
      <FormulaBar />
      <Worksheet />
      <SheetTabs />
      <StatusBar />
      <Taskbar />
    </div>
  );
};

export default App;
